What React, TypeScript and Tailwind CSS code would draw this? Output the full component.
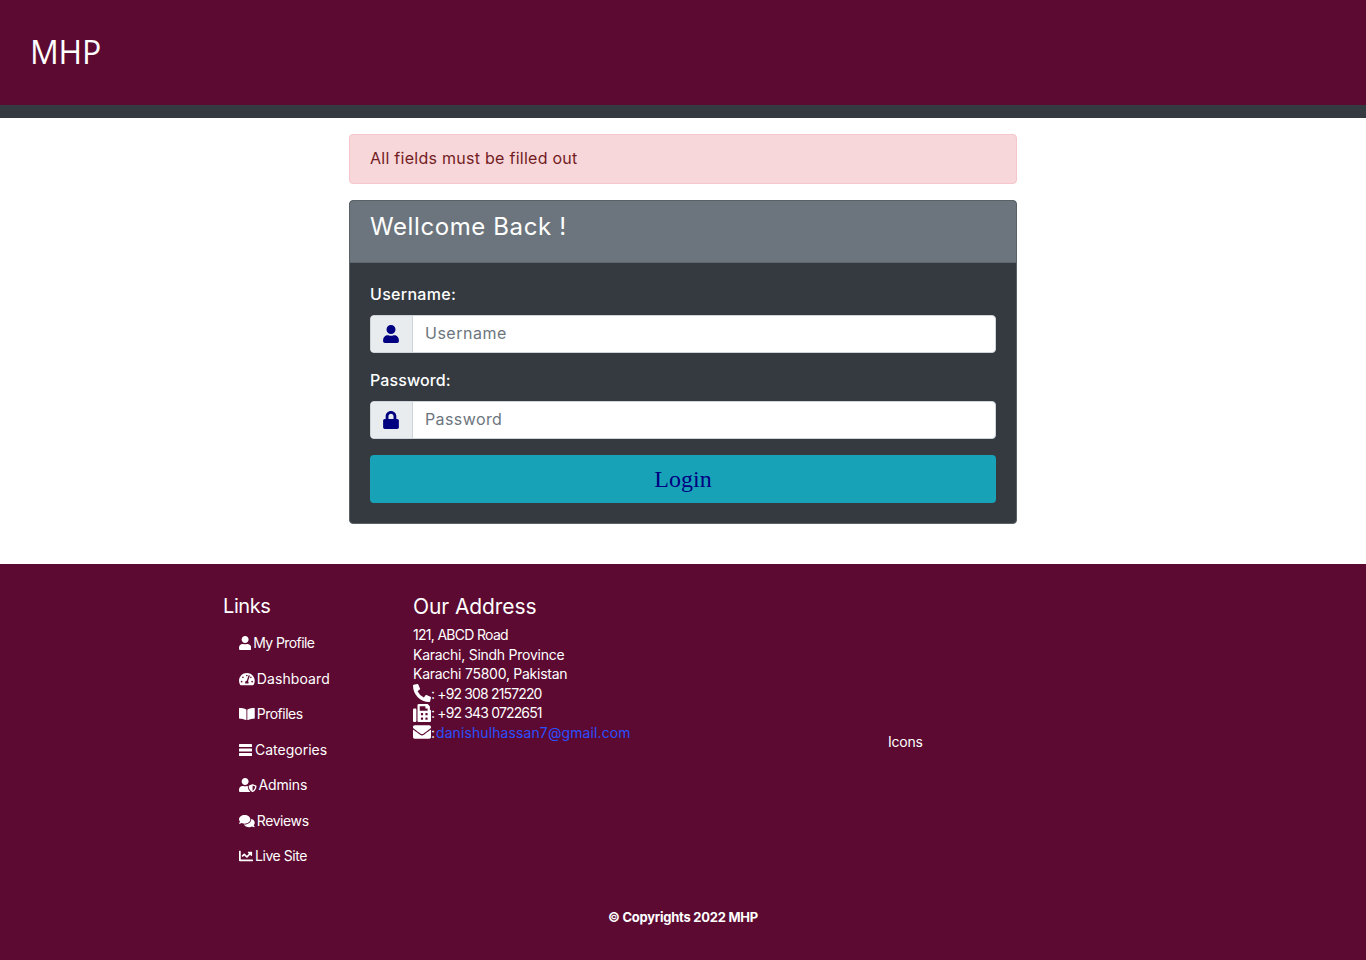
import { FaUser, FaTachometerAlt, FaBookOpen, FaUserShield, FaComments, FaChartLine, FaPhoneAlt, FaFax, FaEnvelope, FaLock } from "react-icons/fa";

function ThickBars({ className }: { className?: string }) {
  return (
    <svg viewBox="0 0 13 12" fill="currentColor" className={className}>
      <rect x="0" y="0" width="13" height="3" rx="0.5" />
      <rect x="0" y="4.5" width="13" height="3" rx="0.5" />
      <rect x="0" y="9" width="13" height="3" rx="0.5" />
    </svg>
  );
}

const links = [
  { Icon: FaUser, label: "My Profile", icon: "h-[14px] w-[12.25px]", text: "tracking-[-0.6px]" },
  { Icon: FaTachometerAlt, label: "Dashboard", icon: "h-[14px] w-[15.75px]", text: "tracking-[0.1px]" },
  { Icon: FaBookOpen, label: "Profiles", icon: "h-[14px] w-[15.75px]", text: "tracking-[-0.5px]" },
  { Icon: ThickBars, label: "Categories", icon: "h-[12px] w-[13px]", text: "ml-[1px] tracking-[0px]" },
  { Icon: FaUserShield, label: "Admins", icon: "h-[14px] w-[17.5px]", text: "tracking-[-0.15px]" },
  { Icon: FaComments, label: "Reviews", icon: "h-[14px] w-[15.75px]", text: "tracking-[-0.4px]" },
  { Icon: FaChartLine, label: "Live Site", icon: "h-[14px] w-[14px]", text: "tracking-[-0.45px]" },
];

export default function App() {
  return (
    <div className="min-h-[960px] bg-white font-['Inter',sans-serif] text-white flex flex-col">
      <header className="h-[105px] bg-[#5c0a31] flex items-center pl-[30px] pb-[2px]">
        <h1 className="text-[32px] font-normal font-['Open_Sans',sans-serif] tracking-[-0.2px]">MHP</h1>
      </header>
      <div className="h-[13px] bg-[#343a40]" />
      <main className="w-[668px] ml-[349px] pt-4 pb-10">
        <div className="h-[50px] bg-[#f8d7da] border border-[#f5c6cb] rounded flex items-center px-5 pb-[2px] text-[#721c24] text-base tracking-[0.27px]">
          All fields must be filled out
        </div>
        <div className="mt-4 bg-[#343a40] rounded border border-[#5a6268] overflow-hidden">
          <div className="h-[62px] bg-[#6c757d] border-b border-[#5f676e] px-5 flex items-center pb-[9px]">
            <h2 className="text-2xl font-normal tracking-[0.6px]">Wellcome Back !</h2>
          </div>
          <div className="px-5 pt-[19px] pb-5">
            <label className="block text-base leading-6 font-medium tracking-[0.3px]">Username:</label>
            <div className="mt-[9px] flex h-[38px] rounded border border-[#ced4da] overflow-hidden bg-white">
              <span className="w-[42px] shrink-0 bg-[#e9ecef] border-r border-[#ced4da] flex items-center justify-center pr-[2px] text-[#000080]">
                <FaUser className="w-[16px] h-[18px]" />
              </span>
              <input placeholder="Username" className="flex-1 px-3 pb-[2px] text-base tracking-[0.5px] text-[#495057] placeholder:text-[#6c757d] outline-none" />
            </div>
            <label className="block text-base leading-6 font-medium mt-[15px] tracking-[0.1px]">Password:</label>
            <div className="mt-[9px] flex h-[38px] rounded border border-[#ced4da] overflow-hidden bg-white">
              <span className="w-[42px] shrink-0 bg-[#e9ecef] border-r border-[#ced4da] flex items-center justify-center pr-[2px] text-[#000080]">
                <FaLock className="w-[16px] h-[18px]" />
              </span>
              <input placeholder="Password" className="flex-1 px-3 pb-[2px] text-base tracking-[0.4px] text-[#495057] placeholder:text-[#6c757d] outline-none" />
            </div>
            <button className="mt-4 w-full h-12 rounded bg-[#17a2b8] text-[#000080] font-['Liberation_Serif',serif] text-2xl">Login</button>
          </div>
        </div>
      </main>
      <footer className="flex-1 bg-[#5c0a31] h-[396px]">
        <div className="flex pl-[223px] pt-[28px]">
          <div className="w-[190px]">
            <h3 className="text-xl leading-7 font-normal tracking-[-0.4px]">Links</h3>
            <ul className="mt-[12.5px] pl-4 flex flex-col gap-[14.5px]">
              {links.map(({ Icon, label, icon, text }) => (
                <li key={label} className="flex items-center gap-[2px] h-[21px] text-sm">
                  <Icon className={`${icon} shrink-0`} />
                  <span className={text}>{label}</span>
                </li>
              ))}
            </ul>
          </div>
          <div className="w-[475px]">
            <h3 className="text-[21px] leading-7 pt-[1px] -mb-[1px] font-normal tracking-[-0.1px]">Our Address</h3>
            <div className="mt-[5px] text-sm leading-[19.5px]">
              <div className="tracking-[-0.7px]">121, ABCD Road</div>
              <div className="tracking-[-0.26px]">Karachi, Sindh Province</div>
              <div className="tracking-[-0.26px]">Karachi 75800, Pakistan</div>
              <div className="flex items-center"><FaPhoneAlt className="w-[18px] h-[18px]" /><span className="tracking-[-0.85px]">: +92 308 2157220</span></div>
              <div className="flex items-center"><FaFax className="w-[18px] h-[18px]" /><span className="tracking-[-0.85px]">: +92 343 0722651</span></div>
              <div className="flex items-center"><FaEnvelope className="w-[18px] h-[18px]" /><span className="tracking-[-0.5px]">:&nbsp;</span><a className="text-[#2a4fff] tracking-[0.1px] -ml-[2px]" href="#">danishulhassan7@gmail.com</a></div>
            </div>
          </div>
          <div className="text-sm pt-[140px] tracking-[-0.2px]">Icons</div>
        </div>
        <div className="mt-[41px] text-center text-[13px] font-bold tracking-[-0.25px]">© Copyrights 2022 MHP</div>
      </footer>
    </div>
  );
}
